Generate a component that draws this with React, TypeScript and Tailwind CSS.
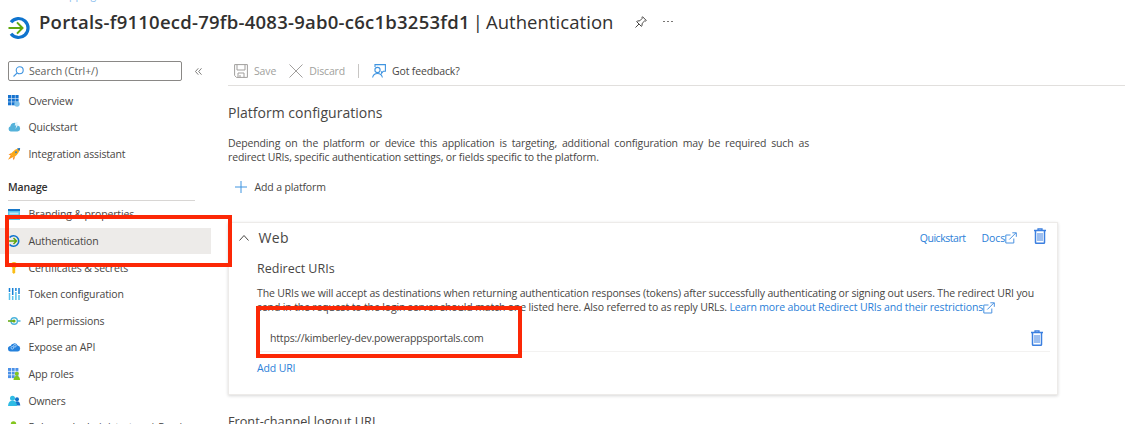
import React from "react";

type IconProps = { className?: string };

function AuthIcon({ className = "" }: IconProps) {
  return (
    <svg viewBox="0 0 22 24" className={className} fill="none">
      <path d="M3 6.200A9.500 9.500 0 1 1 3 17.800" stroke="#0f74ce" strokeWidth="3.200" />
      <path d="M.5 12h14M9 6.400 14.500 12l-5.500 5.600" stroke="#5ea70e" strokeWidth="2" />
    </svg>
  );
}

function Trash() {
  return (
    <svg viewBox="0 0 12 16" className="h-4 w-3 shrink-0" fill="none" stroke="#3b7fe0">
      <path d="M0 2.500h12M4 2.300V.8h4v1.500" strokeWidth="1.300" />
      <path d="M1.500 2.500v12q0 .8.8.8h7.400q.8 0 .8-.8v-12" strokeWidth="1.500" />
      <path d="M4 5v8M6 5v8M8 5v8" strokeWidth="1" />
    </svg>
  );
}

function External() {
  return (
    <svg viewBox="0 0 12 12" className="h-3 w-3 shrink-0" fill="none" stroke="#4a92e0" strokeWidth="1">
      <path d="M5.500 3H.8v8h8V6.500M4.300 7.500 11 .8M7.300.8H11.300V4.800" />
    </svg>
  );
}

const icons: Record<string, React.ReactNode> = {
  overview: (
    <>
      {[0, 3.7, 7.4].map((x) => [0, 3.6, 7.2].map((y) => <rect key={`${x}-${y}`} x={x} y={y} width="3.2" height="3.1" fill="#1673cf" />))}
      <circle cx="9" cy="9" r="2.700" fill="#7cc0ea" />
    </>
  ),
  quick: (
    <>
      <path d="M2.700 10.500A2.700 2.700 0 0 1 2.400 5.300 3.800 3.800 0 0 1 9.800 4.500 3.050 3.050 0 0 1 9.500 10.500Z" fill="#55b2da" />
      <path d="m7.500 1-.8 3.500h1.600L7.500 8l3-4.500H9L9.800 1Z" fill="#e4f5fb" />
    </>
  ),
  rocket: (
    <>
      <path d="m3.500 5-3 1.500L3 7.500ZM7 9l-1.200 3.200L4.600 9.500Z" fill="#fb8b24" />
      <path d="M11.800.2Q7 .5 2.600 6l3.300 3.400Q11.500 5.500 11.800.2Z" fill="#fba919" />
      <path d="m3.200 6.500-3.200 5.300 5.500-3Z" fill="#fb9a19" />
      <path d="M12.200-.1 9 .6l2.500 2.500Z" fill="#1471c8" />
      <circle cx="8" cy="4.200" r="1" fill="#3a83b8" />
    </>
  ),
  brand: (
    <>
      <rect x="0" y="1" width="12" height="11" fill="#58c7ee" />
      <rect x="0" y="1" width="12" height="2" fill="#1878c9" />
      <rect x="1.500" y="4.500" width="9" height="2" fill="#b9eafa" />
    </>
  ),
  auth: (
    <>
      <path d="M1.600 2.600A5.200 5.200 0 1 1 1.600 9.400" stroke="#0f74ce" strokeWidth="1.600" fill="none" />
      <path d="M0 6h8.500M5.500 3l3 3-3 3" stroke="#5ea70e" strokeWidth="1.500" fill="none" />
    </>
  ),
  key: (
    <>
      <circle cx="6" cy="3" r="3" fill="#fbbd16" />
      <path d="M4.400 5h2.800v5.500L5.800 12l-1.400-1.500Z" fill="#fbbd16" />
    </>
  ),
  token: (
    <>
      <path d="M1.500 0v4M4.700 0v7M7.900 0v3M11 0v6" stroke="#1580d6" strokeWidth="1.500" />
      <path d="M1.500 5v7M4.700 8v4M7.900 4v8M11 7v5" stroke="#5bc1ec" strokeWidth="1.500" />
    </>
  ),
  api: (
    <>
      <circle cx="6.200" cy="6" r="3.200" stroke="#4db4dc" strokeWidth="1.400" fill="none" />
      <path d="M0 6h6" stroke="#68ad1a" strokeWidth="1.600" />
      <path d="M9.500 6H12.500" stroke="#4db4dc" strokeWidth="1.500" />
      <circle cx="6" cy="6" r="1.600" fill="#68ad1a" />
    </>
  ),
  expose: (
    <>
      <path d="M3 10.500A2.800 2.800 0 0 1 2.500 4.900 4 4 0 0 1 9.700 4.400 3.100 3.100 0 0 1 9.600 10.500Z" fill="#2581dc" />
      <circle cx="4.300" cy="6.800" r="1.300" stroke="#b8dcff" strokeWidth=".8" fill="none" />
      <circle cx="6.900" cy="4.800" r="1.300" stroke="#b8dcff" strokeWidth=".8" fill="none" />
    </>
  ),
  roles: (
    <>
      {[0, 3.7, 7.4].map((x) => [0, 3.6, 7.2].map((y) => <rect key={`${x}-${y}`} x={x} y={y} width="3" height="2.9" fill="#4b91e8" />))}
      <circle cx="8.800" cy="5.800" r="2" fill="#83c61d" />
      <path d="M5.500 12q.3-4 3.300-4t3.300 4Z" fill="#83c61d" />
    </>
  ),
  owners: (
    <>
      <circle cx="9" cy="4.200" r="2" fill="#1471c8" />
      <path d="M6 10.500q0-4.300 3-4.300t3.300 4.300Z" fill="#1471c8" />
      <circle cx="4.500" cy="3.200" r="2.500" fill="#2fbbe4" />
      <path d="M0 11q.2-5.200 4.500-5.200T9 11Z" fill="#2fbbe4" />
    </>
  ),
  admin: (
    <>
      <circle cx="5.500" cy="3" r="2.700" fill="#83c61d" />
      <path d="M.5 12q.5-6 5-6t5 6Z" fill="#83c61d" />
    </>
  ),
};

function NavItem({ icon, label, active }: { icon: string; label: string; active?: boolean }) {
  return (
    <li className={`flex h-[26.65px] w-[211px] items-center pl-2 ${active ? "bg-[#edebe9]" : ""}`}>
      <svg viewBox="0 0 12 12" className="mr-[8.5px] h-3 w-3 shrink-0 overflow-visible">{icons[icon]}</svg>
      <span className="whitespace-nowrap">{label}</span>
    </li>
  );
}

export default function App() {
  return (
    <div className="relative h-[424px] w-[1125px] overflow-hidden bg-white font-['Open_Sans','Noto_Sans',sans-serif] text-[10.5px] leading-[14px] tracking-[-0.145px] text-[#484644]">
      <div className="absolute top-[-12px] left-[14px] text-[#8cc0ee]">Home &gt; Mapping</div>
      <header className="flex h-[50px] items-start pl-[8px]">
        <AuthIcon className="mt-[16px] h-6 w-[22px] shrink-0" />
        <h1 className="mt-[8px] ml-[9px] text-[18.5px] leading-7 whitespace-nowrap text-[#323130]">
          <span className="font-semibold tracking-[0.24px]">Portals-f9110ecd-79fb-4083-9ab0-c6c1b3253fd1</span>
          <span className="tracking-[0.05px] [word-spacing:-1.9px]"> | Authentication</span>
        </h1>
        <svg viewBox="0 0 12 12" className="mt-4 ml-[21.5px] h-3 w-3 shrink-0" fill="none" stroke="#484644" strokeWidth="1">
          <path d="m7.500.7 3.800 3.800-1 .6-.8-.1-2.300 2.300-.2 2.500-.7.5-4.600-4.600.6-.7 2.500-.2 2.300-2.300-.1-.8ZM4 8 .5 11.500" />
        </svg>
        <span className="mt-[18px] ml-4 flex gap-[2px] pt-[3px]">
          <i className="h-px w-[2px] bg-[#797775]" /><i className="h-px w-[2px] bg-[#797775]" /><i className="h-px w-[2px] bg-[#797775]" />
        </span>
      </header>
      <div className="flex">
        <aside className="w-[228px] shrink-0">
          <div className="flex pt-[11px] pl-[8px]">
            <div className="flex h-5 w-[174px] items-center rounded-[2px] border border-[#8a8886] pl-1">
              <svg viewBox="0 0 11 11" className="h-[11px] w-[11px]" fill="none" stroke="#3f94e0" strokeWidth="1.100">
                <circle cx="6.700" cy="4.300" r="3.500" /><path d="M4.200 6.800.5 10.500" />
              </svg>
              <span className="ml-[5px] tracking-[-0.02px] text-[#605e5c]">Search (Ctrl+/)</span>
            </div>
            <svg viewBox="0 0 7 7" className="mt-[7px] ml-[12.5px] h-[7px] w-[7px]" fill="none" stroke="#605e5c" strokeWidth=".8"><path d="M3.300.3.500 3.500l2.800 3.200M6.500.3 3.700 3.500l2.800 3.200" /></svg>
          </div>
          <ul className="pt-[6.5px]">
            <NavItem icon="overview" label="Overview" />
            <NavItem icon="quick" label="Quickstart" />
            <NavItem icon="rocket" label="Integration assistant" />
          </ul>
          <div className="ml-[8px] h-[33.5px] w-[187px] border-b border-[#d8d6d4] pt-[12.5px] font-semibold text-[#323130]">Manage</div>
          <ul>
            <NavItem icon="brand" label="Branding & properties" />
            <NavItem icon="auth" label="Authentication" active />
            <NavItem icon="key" label="Certificates & secrets" />
            <NavItem icon="token" label="Token configuration" />
            <NavItem icon="api" label="API permissions" />
            <NavItem icon="expose" label="Expose an API" />
            <NavItem icon="roles" label="App roles" />
            <NavItem icon="owners" label="Owners" />
            <NavItem icon="admin" label="Roles and administrators | Preview" />
          </ul>
        </aside>
        <main className="min-w-0 flex-1">
          <div className="flex h-[36px] items-center border-b border-[#e1dfdd] pt-[6px] pl-[6px] text-[#a19f9d]">
            <svg viewBox="0 0 14 14" className="h-[14px] w-[14px]" fill="none" stroke="#a19f9d">
              <path d="M.6.6h12.800v12.800H2.500L.6 11.500ZM3 .6v5.400h8V.6M4 13.400V9h6v4.400M6 11v2.400" />
            </svg>
            <span className="ml-[6px]">Save</span>
            <svg viewBox="0 0 14 14" className="ml-[13px] h-[14px] w-[14px]" stroke="#a19f9d"><path d="m.5.500 13 13M13.500.500l-13 13" /></svg>
            <span className="ml-[6px]">Discard</span>
            <i className="mr-[13px] ml-[13px] h-[14px] w-px bg-[#c8c6c4]" />
            <svg viewBox="0 0 14 14" className="h-[14px] w-[14px]" fill="none" stroke="#3f94e0" strokeWidth="1.100">
              <path d="M3 3V.6h10.400v6.600h-2l-1.800 2V7.200" /><circle cx="5.500" cy="6" r="2.600" /><path d="M.6 13.500a5 5 0 0 1 9.800 0" />
            </svg>
            <span className="ml-[6px] text-[#484644]">Got feedback?</span>
          </div>
          <h2 className="mt-[17px] text-[14px] leading-5 tracking-[0.02px]">Platform configurations</h2>
          <p className="mt-[13px] w-[581px] text-justify">
            Depending on the platform or device this application is targeting, additional configuration may be required such as redirect URIs, specific authentication settings, or fields specific to the platform.
          </p>
          <div className="mt-[15px] flex h-4 items-center pl-[7px]">
            <svg viewBox="0 0 12 12" className="h-3 w-3" stroke="#3f94e0"><path d="M6 0v12M0 6h12" /></svg>
            <span className="ml-[7.5px]">Add a platform</span>
          </div>
          <section className="mt-[27px] h-[173px] w-[830px] border border-[#edebe9] shadow-[0_1px_3px_rgba(0,0,0,0.16)]">
            <div className="flex h-[29px] items-center pl-[10px]">
              <svg viewBox="0 0 10 6" className="h-[6px] w-[10px]" fill="none" stroke="#484644"><path d="m.5 5.500 4.500-5 4.500 5" /></svg>
              <h3 className="ml-[9.5px] text-[14px] tracking-[0.3px]">Web</h3>
              <span className="ml-auto tracking-[-0.45px] text-[#2b80d8]">Quickstart</span>
              <span className="mr-[17px] ml-[16px] flex items-center text-[#2b80d8]">Docs<External /></span>
              <span className="mr-[11px] pb-[3px]"><Trash /></span>
            </div>
            <div className="pl-[28px]">
              <h4 className="mt-[8px] text-[12.5px] leading-[18px] tracking-normal">Redirect URIs</h4>
              <p className="mt-[8px] whitespace-nowrap">
                The URIs we will accept as destinations when returning authentication responses (tokens) after successfully authenticating or signing out users. The redirect URI you
                <br />
                send in the request to the login server should match one listed here. Also referred to as reply URLs. <span className="text-[#2b80d8]">Learn more about Redirect URIs and their restrictions<span className="inline-block h-3 align-[-3px]"><External /></span></span>
              </p>
              <div className="mr-[7px] flex h-[38px] items-center border-b border-[#f3f2f1] pt-[11px] pl-[13px]">
                <span className="tracking-[-0.17px]">https://kimberley-dev.powerappsportals.com</span>
                <span className="mr-[7px] ml-auto"><Trash /></span>
              </div>
              <div className="mt-[9px] text-[#2b80d8]">Add URI</div>
            </div>
          </section>
          <h2 className="mt-[17px] text-[12.7px] leading-[18px] tracking-normal">Front-channel logout URI</h2>
        </main>
      </div>
      <div className="absolute top-[215px] left-[5px] h-[52px] w-[227px] border-4 border-[#fc2806]" />
      <div className="absolute top-[306px] left-[256px] h-[52px] w-[266px] border-4 border-[#fc2806]" />
    </div>
  );
}
